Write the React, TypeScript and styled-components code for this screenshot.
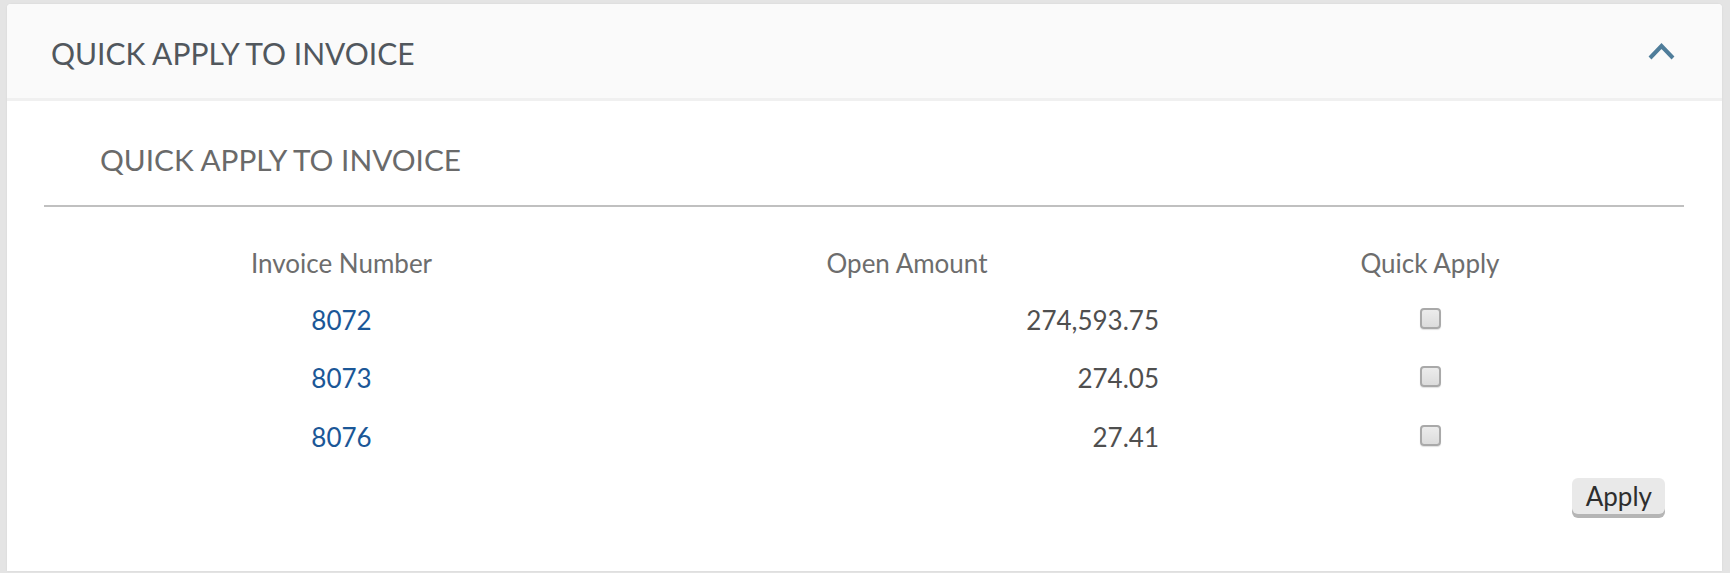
import styled, { createGlobalStyle } from "styled-components";

const GlobalStyle = createGlobalStyle`
  html, body {
    margin: 0;
    padding: 0;
    background: #e4e4e4;
    font-family: Lato, "Open Sans", "Liberation Sans", sans-serif;
  }
`;

const Page = styled.div`
  padding: 4px 8px 0 7px;
  height: 573px;
  box-sizing: border-box;
  overflow: hidden;
`;

const Card = styled.section`
  background: #ffffff;
  border-radius: 4px 4px 0 0;
  height: 567px;
  box-shadow: 0 0 2px rgba(0, 0, 0, 0.08);
  overflow: hidden;
`;

const CardHeader = styled.header`
  display: flex;
  align-items: flex-start;
  justify-content: space-between;
  background: #fafafa;
  border-bottom: 3px solid #f0f0f0;
  padding: 34px 47px 30px 44px;
  height: 30px;
`;

const HeaderTitle = styled.h2`
  margin: 0;
  font-size: 30px;
  line-height: 30px;
  font-weight: 400;
  color: #51575d;
`;

const Chevron = styled.svg`
  width: 27px;
  height: 18px;
  margin-top: 4px;
`;

const CardBody = styled.div`
  padding: 44px 38px 0 37px;
`;

const SubTitle = styled.h3`
  margin: 0 0 30px 56px;
  font-size: 29.8px;
  line-height: 29.8px;
  font-weight: 400;
  color: #6a6a6a;
`;

const Rule = styled.hr`
  margin: 0;
  border: none;
  height: 2px;
  background: #c0c0c0;
`;

const Grid = styled.div`
  display: grid;
  grid-template-columns: 595px 530px 1fr;
  margin-top: 43px;
`;

type Align = "center" | "right";

const Cell = styled.div<{ $align: Align; $head?: boolean; $pl?: number; $pr?: number }>`
  display: flex;
  justify-content: ${(p) => (p.$align === "right" ? "flex-end" : "center")};
  align-items: flex-start;
  font-size: 26px;
  line-height: 26px;
  height: 26px;
  padding: 0 ${(p) => p.$pr ?? 0}px ${(p) => (p.$head ? 31 : 32.5)}px
    ${(p) => p.$pl ?? 0}px;
  color: ${(p) => (p.$head ? "#6d6d6d" : "#4f4f4f")};
`;

const InvoiceLink = styled.a`
  color: #1b5797;
  text-decoration: none;
  cursor: pointer;
`;

const Check = styled.input.attrs({ type: "checkbox" })`
  appearance: none;
  margin: 1px 0 0;
  width: 21px;
  height: 21px;
  box-sizing: border-box;
  border: 2px solid #a9a9a9;
  border-radius: 4px;
  background: linear-gradient(#ececec, #dcdcdc);
  box-shadow: 0 1px 1px rgba(0, 0, 0, 0.12);
`;

const Actions = styled.div`
  display: flex;
  justify-content: flex-end;
  padding-right: 19px;
  margin-top: -4px;
`;

const ApplyButton = styled.button`
  font-family: inherit;
  font-size: 26px;
  line-height: 26px;
  color: #2e2e2e;
  background: #e9e9e9;
  border: none;
  border-radius: 6px;
  box-shadow: 0 4px 0 #b5b5b5;
  padding: 5px 13px 5px 14px;
  height: 36px;
  cursor: pointer;
`;

const rows = [
  { id: "8072", amount: "274,593.75" },
  { id: "8073", amount: "274.05" },
  { id: "8076", amount: "27.41" },
];

export default function App() {
  return (
    <Page>
      <GlobalStyle />
      <Card>
        <CardHeader>
          <HeaderTitle>QUICK APPLY TO INVOICE</HeaderTitle>
          <Chevron viewBox="0 0 27 18">
            <polyline
              points="2,16 13.5,4 25,16"
              fill="none"
              stroke="#4f7d9a"
              strokeWidth="4"
            />
          </Chevron>
        </CardHeader>
        <CardBody>
          <SubTitle>QUICK APPLY TO INVOICE</SubTitle>
          <Rule />
          <Grid>
            <Cell $align="center" $head>
              Invoice Number
            </Cell>
            <Cell $align="center" $head $pl={16} $pr={10}>
              Open Amount
            </Cell>
            <Cell $align="center" $head $pl={7}>
              Quick Apply
            </Cell>
            {rows.map((r) => (
              <>
                <Cell key={r.id + "a"} $align="center">
                  <InvoiceLink>{r.id}</InvoiceLink>
                </Cell>
                <Cell key={r.id + "b"} $align="right" $pr={10}>
                  {r.amount}
                </Cell>
                <Cell key={r.id + "c"} $align="center" $pl={7}>
                  <Check />
                </Cell>
              </>
            ))}
          </Grid>
          <Actions>
            <ApplyButton>Apply</ApplyButton>
          </Actions>
        </CardBody>
      </Card>
    </Page>
  );
}
